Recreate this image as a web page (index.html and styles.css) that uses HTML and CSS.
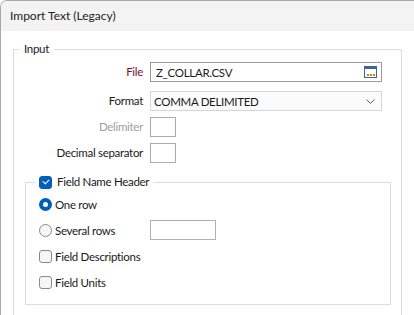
FILE: index.html
```html
<!DOCTYPE html>
<html lang="en">
<head>
  <meta charset="UTF-8">
  <title>Import Text (Legacy)</title>
  <link rel="stylesheet" href="styles.css">
</head>
<body>
  <div class="window">
    <div class="titlebar">Import Text (Legacy)</div>
    <div class="content">
      <fieldset class="group">
        <legend>Input</legend>
        <div class="form">
          <label class="lbl lbl-file">File</label>
          <div class="field field-file">
            <span>Z_COLLAR.CSV</span>
            <svg class="browse" width="13" height="12" viewBox="0 0 13 12">
              <rect x="0.5" y="0.5" width="12" height="11" fill="#fff" stroke="#3f6598"/>
              <rect x="1" y="1" width="11" height="2" fill="#3f6598"/>
              <rect x="3" y="8" width="2" height="2" fill="#c9822a"/>
              <rect x="6" y="8" width="2" height="2" fill="#c9822a"/>
              <rect x="9" y="8" width="2" height="2" fill="#c9822a"/>
            </svg>
          </div>
          <label class="lbl">Format</label>
          <div class="field field-select">
            <span>COMMA DELIMITED</span>
            <svg class="chevron" width="9" height="5" viewBox="0 0 9 5">
              <path d="M0.5 0.5 L4.5 4.5 L8.5 0.5" fill="none" stroke="#606060" stroke-width="1"/>
            </svg>
          </div>
          <label class="lbl lbl-disabled">Delimiter</label>
          <div class="field field-small"></div>
          <label class="lbl">Decimal separator</label>
          <div class="field field-small"></div>
        </div>

        <fieldset class="group group-inner">
          <legend><span class="check check-on"></span>Field Name Header</legend>
          <div class="options">
            <div class="opt"><span class="radio radio-on"></span>One row</div>
            <div class="opt opt-rows">
              <span class="opt-label"><span class="radio"></span>Several rows</span>
              <div class="field field-rows"></div>
            </div>
            <div class="opt"><span class="check"></span>Field Descriptions</div>
            <div class="opt"><span class="check"></span>Field Units</div>
          </div>
        </fieldset>
      </fieldset>
    </div>
  </div>
</body>
</html>
```

FILE: styles.css
```css
body {
  margin: 0;
  font-family: Lato, "Liberation Sans", sans-serif;
  font-size: 11.5px;
  letter-spacing: -0.3px;
  color: #1a1a1a;
  background: #fff;
}

.window {
  height: 315px;
  border-top: 1px solid #a8a8a8;
  border-left: 1px solid #a8a8a8;
  border-top-left-radius: 7px;
  overflow: hidden;
  box-sizing: border-box;
}

.titlebar {
  height: 30px;
  line-height: 30px;
  padding-left: 9px;
  background: #f3f3f3;
  color: #222;
  font-size: 12px;
  letter-spacing: 0;
}

.content {
  padding: 10px 0 0 12px;
}

.group {
  margin: 0;
  padding: 0;
  border: 1px solid #dcdcdc;
  width: 389px;
  box-sizing: border-box;
  height: 330px;
}

.group legend {
  margin-left: 5px;
  padding: 0 5px;
  line-height: 16px;
}

.form {
  display: grid;
  grid-template-columns: 129px 232px;
  grid-template-rows: 23px 20px 20px 20px;
  column-gap: 7px;
  row-gap: 6px;
  margin-top: 5px;
}

.lbl {
  text-align: right;
  line-height: 20px;
}

.lbl-file {
  color: #7a1030;
}

.lbl-disabled {
  color: #a0a0a0;
}

.field {
  box-sizing: border-box;
  height: 20px;
  border: 1px solid #ababab;
  background: #fff;
  display: flex;
  align-items: center;
  justify-content: space-between;
}

.field-file {
  border-color: #9c9c9c;
  padding: 0 4px 0 5px;
}

.field-select {
  border-color: #d6d6d6;
  background: #fbfbfb;
  padding: 0 6px 0 3px;
}

.field-small {
  width: 26px;
}

.group-inner {
  width: 366px;
  height: 131px;
  margin: 11px 0 0 11px;
  padding: 4px 0 0 13px;
}

.group-inner legend {
  margin-left: -4px;
  padding: 0 4px;
  display: flex;
  align-items: center;
  gap: 5px;
}

.options {
  display: grid;
  grid-auto-rows: 20px;
  row-gap: 6px;
}

.opt, .opt-label {
  display: flex;
  align-items: center;
  gap: 3px;
}

.opt-rows {
  display: grid;
  grid-template-columns: 108px 66px;
}

.field-rows {
  border-color: #b0b0b0;
}

.check {
  width: 13px;
  height: 13px;
  box-sizing: border-box;
  border: 1px solid #8a8a8a;
  border-radius: 3px;
  background: #f6f6f6;
  position: relative;
}

.check-on {
  background: #005fb8;
  border-color: #005fb8;
}

.check-on::after {
  content: "";
  position: absolute;
  left: 3px;
  top: 2px;
  width: 5px;
  height: 3px;
  border-left: 1.3px solid #fff;
  border-bottom: 1.3px solid #fff;
  transform: rotate(-45deg);
}

.radio {
  width: 13px;
  height: 13px;
  box-sizing: border-box;
  border: 1px solid #8a8a8a;
  border-radius: 50%;
  background: #f6f6f6;
}

.radio-on {
  border: 4px solid #005fb8;
  background: #fff;
}
```
